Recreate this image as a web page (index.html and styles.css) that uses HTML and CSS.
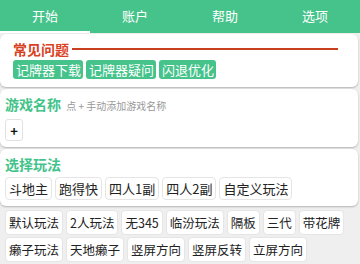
FILE: index.html
```html
<!DOCTYPE html>
<html lang="zh">
<head>
  <meta charset="UTF-8">
  <meta name="viewport" content="width=device-width, initial-scale=1.0">
  <title>记牌器</title>
  <link rel="stylesheet" href="styles.css">
</head>
<body>

  <div class="tabs">
    <div class="tab active">开始</div>
    <div class="tab">账户</div>
    <div class="tab">帮助</div>
    <div class="tab">选项</div>
  </div>

  <div class="card faq">
    <div class="faq-title">
      <span>常见问题</span>
      <span class="faq-line"></span>
    </div>
    <div class="btn-row">
      <button class="green-btn">记牌器下载</button>
      <button class="green-btn">记牌器疑问</button>
      <button class="green-btn">闪退优化</button>
    </div>
  </div>

  <div class="card">
    <div class="card-title">游戏名称 <span class="hint">点 + 手动添加游戏名称</span></div>
    <div class="btn-row">
      <button class="plus-btn">+</button>
    </div>
  </div>

  <div class="card">
    <div class="card-title">选择玩法</div>
    <div class="btn-row">
      <button class="opt-btn">斗地主</button>
      <button class="opt-btn">跑得快</button>
      <button class="opt-btn">四人1副</button>
      <button class="opt-btn">四人2副</button>
      <button class="opt-btn">自定义玩法</button>
    </div>
  </div>

  <div class="rules">
    <button class="opt-btn tall">默认玩法</button>
    <button class="opt-btn tall">2人玩法</button>
    <button class="opt-btn tall">无345</button>
    <button class="opt-btn tall">临汾玩法</button>
    <button class="opt-btn tall">隔板</button>
    <button class="opt-btn tall">三代</button>
    <button class="opt-btn tall">带花牌</button>
    <button class="opt-btn tall">癞子玩法</button>
    <button class="opt-btn tall">天地癞子</button>
    <button class="opt-btn tall">竖屏方向</button>
    <button class="opt-btn tall">竖屏反转</button>
    <button class="opt-btn tall">立屏方向</button>
  </div>

</body>
</html>
```

FILE: styles.css
```css
body {
  margin: 0;
  background: #efefef;
  font-family: 'Noto Sans CJK SC', 'Noto Sans', sans-serif;
  color: #222;
}
.tabs {
  display: flex;
  background: #46c38b;
  height: 33px;
}
.tab {
  flex: 1;
  text-align: center;
  color: #fff;
  font-size: 13px;
  line-height: 31px;
  height: 31px;
}
.tab.active {
  border-bottom: 2px solid #fff;
}
.card {
  background: #fff;
  margin: 1px 2px 2px 0;
  border-radius: 6px;
  box-shadow: 0 1px 2px rgba(0, 0, 0, 0.25);
  padding: 4px 5px 6px;
}
.faq {
  padding: 5px 20px 8px 13px;
}
.faq-title {
  display: flex;
  align-items: center;
  color: #d8431f;
  font-size: 14px;
  font-weight: bold;
  line-height: 20px;
  margin-bottom: 1px;
}
.faq-line {
  flex: 1;
  height: 2px;
  background: #c8401f;
  margin-left: 3px;
}
.btn-row {
  display: flex;
  flex-wrap: wrap;
  gap: 3px;
}
button {
  font-family: inherit;
  cursor: pointer;
}
.green-btn {
  background: #46c38b;
  color: #fff;
  border: none;
  border-radius: 3px;
  font-size: 13px;
  line-height: 17px;
  padding: 1px 2px 1px 3px;
}
.card-title {
  color: #43c38a;
  font-size: 14px;
  font-weight: bold;
  line-height: 22px;
  margin-bottom: 2px;
}
.hint {
  color: #999;
  font-size: 10px;
  font-weight: normal;
  margin-left: 2px;
}
.plus-btn {
  background: #fff;
  border: 1px solid #e2e2e2;
  border-radius: 3px;
  font-size: 13px;
  font-weight: bold;
  color: #111;
  width: 18px;
  height: 22px;
  padding: 0;
}
.opt-btn {
  background: #fff;
  border: 1px solid #e5e5e5;
  border-radius: 4px;
  font-size: 13px;
  line-height: 17px;
  padding: 2px 3px;
  color: #222;
}
.opt-btn.tall {
  font-size: 12.5px;
  padding: 3px 3px;
}
.rules {
  display: flex;
  flex-wrap: wrap;
  gap: 2px 3px;
  padding: 2px 5px;
}
```
